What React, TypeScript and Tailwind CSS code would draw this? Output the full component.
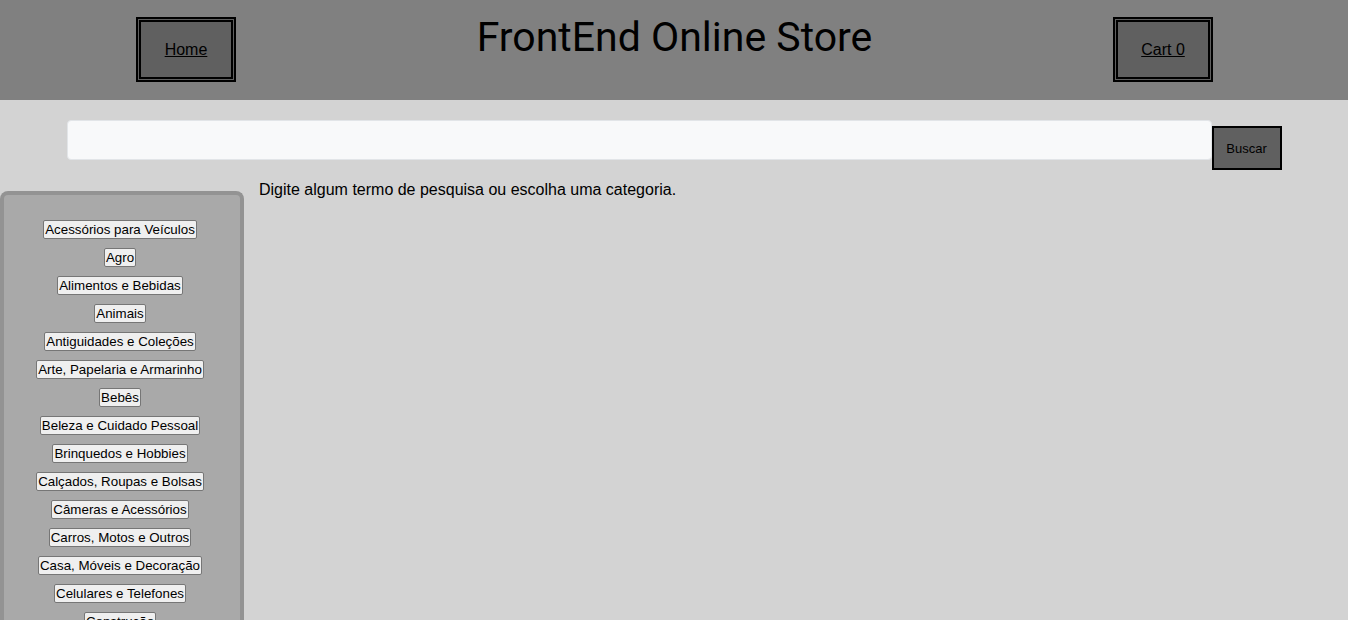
import React from "react";

const categories = [
  "Acessórios para Veículos",
  "Agro",
  "Alimentos e Bebidas",
  "Animais",
  "Antiguidades e Coleções",
  "Arte, Papelaria e Armarinho",
  "Bebês",
  "Beleza e Cuidado Pessoal",
  "Brinquedos e Hobbies",
  "Calçados, Roupas e Bolsas",
  "Câmeras e Acessórios",
  "Carros, Motos e Outros",
  "Casa, Móveis e Decoração",
  "Celulares e Telefones",
  "Construção",
  "Eletrodomésticos",
  "Eletrônicos, Áudio e Vídeo",
  "Esportes e Fitness",
  "Ferramentas",
  "Festas e Lembrancinhas",
  "Games",
  "Imóveis",
  "Indústria e Comércio",
  "Informática",
  "Ingressos",
  "Instrumentos Musicais",
  "Joias e Relógios",
  "Livros, Revistas e Comics",
  "Música, Filmes e Seriados",
  "Saúde",
  "Serviços",
  "Mais Categorias",
];

function NavBox({ label }: { label: string }) {
  return (
    <a
      href="#"
      className="flex h-[65px] w-[100px] items-center justify-center border-[5px] border-double border-black bg-[#606060] text-base text-black underline"
    >
      {label}
    </a>
  );
}

export default function App() {
  return (
    <div className="min-h-screen bg-[#d3d3d3] font-['Liberation_Sans',Arial,sans-serif] text-black">
      <header className="flex h-[100px] items-start justify-between bg-[#808080] pl-[136px] pr-[135px]">
        <div className="mt-[17px]">
          <NavBox label="Home" />
        </div>
        <h1 className="mt-[14px] font-['Roboto',sans-serif] text-[41px] leading-[46px] font-normal">
          FrontEnd Online Store
        </h1>
        <div className="mt-[17px]">
          <NavBox label="Cart 0" />
        </div>
      </header>

      <div className="flex items-start justify-center pt-5">
        <input
          type="text"
          className="h-10 w-[1145px] rounded border border-[#e2e5e8] bg-[#f8f9fa] px-3 outline-none"
        />
        <button className="mt-[6px] h-[44px] w-[70px] border-2 border-black bg-[#606060] pt-px text-[13px] text-black">
          Buscar
        </button>
      </div>

      <div className="flex items-start gap-[15px]">
        <aside className="mt-[21px] w-[244px] rounded-t-[8px] border-4 border-b-0 border-[#939393] bg-[#a9a9a9]">
          <div className="flex flex-col items-center gap-[9px] pt-[25px] pr-[4px] pb-6">
            {categories.map((c) => (
              <button
                key={c}
                className="rounded-[2px] border border-[#767676] bg-[#efefef] px-px py-px text-[13.333px] leading-[15px] text-black"
              >
                {c}
              </button>
            ))}
          </div>
        </aside>
        <p className="mt-[11px] text-base leading-[18px]">
          Digite algum termo de pesquisa ou escolha uma categoria.
        </p>
      </div>
    </div>
  );
}
